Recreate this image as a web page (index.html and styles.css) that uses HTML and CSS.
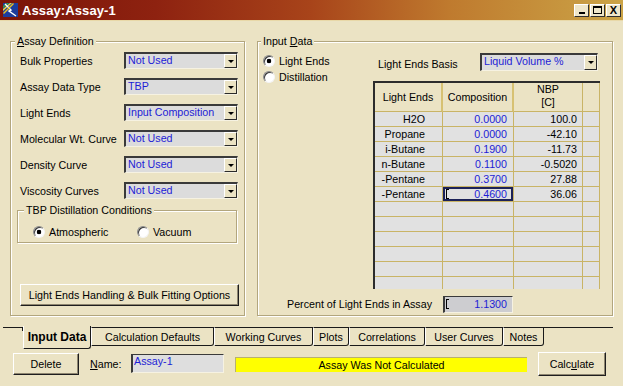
FILE: index.html
```html
<!DOCTYPE html>
<html>
<head>
<meta charset="utf-8">
<title>Assay:Assay-1</title>
<link rel="stylesheet" href="styles.css">
</head>
<body>
<div class="window">
  <div class="titlebar">
    <svg class="appicon" width="16" height="16" viewBox="0 0 16 16">
      <rect x="0" y="1" width="15" height="14" fill="#1c3c9c"/>
      <path d="M0 4 L4 1 L6 1 L0 6 Z" fill="#3aa040"/>
      <path d="M0 7 L7 1 L9 1 L0 9 Z" fill="#f2dc3a"/>
      <path d="M2 2 L8 8 L6 9 L13 14" stroke="#ffffff" stroke-width="1.4" fill="none"/>
      <path d="M0 11 L10 1 L11 2 L1 12 Z" fill="#e8c020"/>
    </svg>
    <span class="title">Assay:Assay-1</span>
    <div class="wbtns">
      <span class="wbtn"><i class="g-min"></i></span>
      <span class="wbtn"><i class="g-max"></i></span>
      <span class="wbtn close">X</span>
    </div>
  </div>

  <div class="main">
    <div class="group left">
      <span class="legend lg-left"><u>A</u>ssay Definition</span>
      <div class="frow first"><span class="lbl">Bulk Properties</span><div class="combo"><span class="val">Not Used</span><span class="arr"></span></div></div>
      <div class="frow"><span class="lbl">Assay Data Type</span><div class="combo"><span class="val">TBP</span><span class="arr"></span></div></div>
      <div class="frow"><span class="lbl">Light Ends</span><div class="combo"><span class="val">Input Composition</span><span class="arr"></span></div></div>
      <div class="frow"><span class="lbl">Molecular Wt. Curve</span><div class="combo"><span class="val">Not Used</span><span class="arr"></span></div></div>
      <div class="frow"><span class="lbl">Density Curve</span><div class="combo"><span class="val">Not Used</span><span class="arr"></span></div></div>
      <div class="frow"><span class="lbl">Viscosity Curves</span><div class="combo"><span class="val">Not Used</span><span class="arr"></span></div></div>

      <div class="group sub">
        <span class="legend lg-sub">TBP Distillation Conditions</span>
        <div class="hradios">
          <div class="radio atm"><span class="dot on"></span>Atmospheric</div>
          <div class="radio"><span class="dot"></span>Vacuum</div>
        </div>
      </div>

      <div class="btn wide">Light Ends Handling &amp; Bulk Fitting Options</div>
    </div>

    <div class="group right">
      <span class="legend lg-right">Input <u>D</u>ata</span>
      <div class="toprow">
        <div class="vradios">
          <div class="radio"><span class="dot on"></span>Light Ends</div>
          <div class="radio"><span class="dot"></span>Distillation</div>
        </div>
        <div class="tablecol">
          <div class="basis">
            <span class="basis-lbl">Light Ends Basis</span>
            <div class="combo basis-combo"><span class="val">Liquid Volume %</span><span class="arr"></span></div>
          </div>
          <div class="gridwrap">
            <div class="grid">
              <div class="hc h1">Light Ends</div>
              <div class="hc h2">Composition</div>
              <div class="hc h3">NBP<br>[C]</div>
              <div class="hc h4"></div>

              <div class="c name">H2O</div><div class="c comp">0.0000</div><div class="c nbp">100.0</div><div class="c ex"></div>
              <div class="c name">Propane</div><div class="c comp">0.0000</div><div class="c nbp">-42.10</div><div class="c ex"></div>
              <div class="c name">i-Butane</div><div class="c comp">0.1900</div><div class="c nbp">-11.73</div><div class="c ex"></div>
              <div class="c name">n-Butane</div><div class="c comp">0.1100</div><div class="c nbp">-0.5020</div><div class="c ex"></div>
              <div class="c name">-Pentane</div><div class="c comp">0.3700</div><div class="c nbp">27.88</div><div class="c ex"></div>
              <div class="c name">-Pentane</div><div class="c comp sel"><span class="caret"></span><span>0.4600</span></div><div class="c nbp">36.06</div><div class="c ex"></div>

              <div class="c"></div><div class="c"></div><div class="c"></div><div class="c ex"></div>
              <div class="c"></div><div class="c"></div><div class="c"></div><div class="c ex"></div>
              <div class="c"></div><div class="c"></div><div class="c"></div><div class="c ex"></div>
              <div class="c"></div><div class="c"></div><div class="c"></div><div class="c ex"></div>
              <div class="c"></div><div class="c"></div><div class="c"></div><div class="c ex"></div>
              <div class="c"></div><div class="c"></div><div class="c"></div><div class="c ex"></div>
            </div>
          </div>
        </div>
      </div>
      <div class="pctrow">
        <span class="pctlbl">Percent of Light Ends in Assay</span>
        <div class="field pct"><span class="caret"></span><span class="pctval">1.1300</span></div>
      </div>
    </div>
  </div>

  <div class="tabs">
    <span class="tab-stub"></span>
    <span class="tab active t1">Input Data</span>
    <span class="tab t2">Calculation Defaults</span>
    <span class="tab t3">Working Curves</span>
    <span class="tab t4">Plots</span>
    <span class="tab t5">Correlations</span>
    <span class="tab t6">User Curves</span>
    <span class="tab t7">Notes</span>
    <span class="tab-fill"></span>
  </div>

  <div class="bottombar">
    <div class="btn del">Delete</div>
    <span class="namelbl"><u>N</u>ame:</span>
    <div class="field name">Assay-1</div>
    <div class="status">Assay Was Not Calculated</div>
    <div class="btn calc">Calc<u>u</u>late</div>
  </div>
</div>
</body>
</html>
```

FILE: styles.css
```css
* { box-sizing: border-box; }

html, body {
  margin: 0;
  padding: 0;
}

body {
  width: 623px;
  height: 386px;
  overflow: hidden;
  background: #ebe3c4;
  font-family: "Liberation Sans", Arial, sans-serif;
  font-size: 10.7px;
  color: #000;
}

.window {
  width: 623px;
  height: 386px;
  display: flex;
  flex-direction: column;
}

/* ---------- title bar ---------- */
.titlebar {
  height: 21px;
  display: flex;
  align-items: center;
  padding: 0 2px 0 2px;
  background: linear-gradient(to right, #7a1408 0%, #8e2210 25%, #a8441a 50%, #bf7a2e 72%, #cba447 100%);
  border-bottom: 1px solid #e8d8a8;
}

.appicon {
  margin-left: 1px;
  flex: none;
}

.title {
  margin-left: 3px;
  color: #fff;
  font-weight: bold;
  font-size: 13px;
  letter-spacing: 0.1px;
}

.wbtns {
  margin-left: auto;
  display: flex;
  gap: 1px;
}

.wbtn {
  width: 15px;
  height: 13px;
  background: #efe6c9;
  border: 1px solid;
  border-color: #fff #303030 #303030 #fff;
  display: flex;
  align-items: center;
  justify-content: center;
  font-weight: bold;
  font-size: 11px;
  line-height: 11px;
}

.g-min {
  width: 6px;
  height: 2px;
  background: #000;
  margin-top: 6px;
}

.g-max {
  width: 9px;
  height: 8px;
  border: 1px solid #000;
  border-top-width: 2px;
}

/* ---------- main area ---------- */
.main {
  display: flex;
  gap: 12px;
  padding: 20px 10px 0 10px;
}

.group {
  border: 1px solid #b2a67e;
  box-shadow: inset 1px 1px 0 #fff, 1px 1px 0 #fff;
  display: flex;
  flex-direction: column;
}

.legend {
  align-self: flex-start;
  height: 13px;
  line-height: 13px;
  margin-top: -7px;
  padding: 0 2px;
  background: #ebe3c4;
  white-space: nowrap;
}

.group.left {
  width: 235px;
  height: 275px;
  padding: 0 6px;
}

.lg-left { margin-left: -2px; }

.frow {
  display: flex;
  align-items: center;
  height: 17px;
  margin-top: 9px;
}

.frow.first { margin-top: 4px; }

.lbl {
  width: 107px;
  padding-left: 3px;
  white-space: nowrap;
}

/* combo box */
.combo {
  width: 114px;
  height: 17px;
  display: flex;
  background: #dcdcdc;
  border-top: 2px solid #3a3a3a;
  border-left: 2px solid #3a3a3a;
  border-right: 1px solid #f6f2e2;
  border-bottom: 1px solid #f6f2e2;
}

.combo .val {
  flex: 1;
  color: #1c1cd6;
  padding-left: 2px;
  line-height: 13px;
  white-space: nowrap;
  overflow: hidden;
}

.combo .arr {
  width: 13px;
  background: #ebe3c4;
  border: 1px solid;
  border-color: #fff #2a2a2a #2a2a2a #fff;
  display: flex;
  align-items: center;
  justify-content: center;
}

.combo .arr::before {
  content: "";
  border-left: 3px solid transparent;
  border-right: 3px solid transparent;
  border-top: 3px solid #000;
}

/* TBP sub group */
.group.sub {
  width: 220px;
  height: 33px;
  margin-top: 11px;
  padding: 0 0 0 15px;
}

.lg-sub { margin-left: -9px; }

.hradios {
  display: flex;
  margin-top: 7px;
}

.radio {
  display: flex;
  align-items: center;
  height: 16px;
  white-space: nowrap;
}

.radio.atm { width: 104px; }

.dot {
  width: 12px;
  height: 12px;
  border-radius: 50%;
  margin-right: 4px;
  background: #fff;
  border: 1px solid;
  border-color: #8a8a8a #f4f4f4 #f4f4f4 #8a8a8a;
  box-shadow: inset 1px 1px 0 #3a3a3a;
  flex: none;
}

.dot.on {
  background: radial-gradient(circle at 50% 50%, #000 0, #000 2px, #fff 2.6px);
}

/* buttons */
.btn {
  background: #ebe3c4;
  border: 1px solid;
  border-color: #fff #1e1e1e #1e1e1e #fff;
  box-shadow: inset -1px -1px 0 #8e8670;
  display: flex;
  align-items: center;
  justify-content: center;
  white-space: nowrap;
}

.btn.wide {
  width: 219px;
  height: 22px;
  margin-top: 41px;
  margin-left: 3px;
}

/* ---------- right group ---------- */
.group.right {
  width: 356px;
  height: 275px;
  padding: 0 12px 0 5px;
}

.lg-right { margin-left: -2px; }

.toprow {
  display: flex;
  margin-top: 5px;
}

.vradios {
  width: 110px;
  display: flex;
  flex-direction: column;
  padding-top: 0;
}

.tablecol {
  width: 227px;
  display: flex;
  flex-direction: column;
}

.basis {
  display: flex;
  align-items: center;
  height: 18px;
}

.basis-lbl {
  padding-left: 5px;
  padding-top: 3px;
}

.combo.basis-combo {
  width: 118px;
  height: 18px;
  margin-left: auto;
  margin-right: 2px;
}

.gridwrap {
  margin-top: 10px;
  height: 208px;
  overflow: hidden;
  border-top: 2px solid #2c2c2c;
  border-left: 2px solid #2c2c2c;
}

.grid {
  display: grid;
  grid-template-columns: 68px 71px 69px 17px;
  grid-template-rows: 29px;
  grid-auto-rows: 15px;
}

.hc {
  background: #ebe3c4;
  border-right: 1px solid #c9b466;
  border-bottom: 1px solid #c9b466;
  display: flex;
  align-items: center;
  justify-content: center;
  text-align: center;
  line-height: 12px;
}

.hc.h1, .hc.h2 { border-right: 2px solid #d7c172; }
.hc.h3 { align-items: flex-start; padding-top: 0; line-height: 13px; }

.c {
  background: #e1e1e1;
  border-right: 1px solid #c9b466;
  border-bottom: 1px solid #c9b466;
  line-height: 14px;
  white-space: nowrap;
  display: flex;
  align-items: center;
  justify-content: flex-end;
}

.c.name { padding-right: 17px; }
.c.comp { color: #1c1cd6; padding-right: 6px; }
.c.nbp { padding-right: 5px; }

.c.sel {
  box-shadow: inset 0 0 0 2px #1c2258;
  justify-content: space-between;
  padding-left: 3px;
}

.caret {
  width: 3px;
  height: 10px;
  border: 1px solid #000;
  border-right: none;
}

/* percent row */
.pctrow {
  display: flex;
  align-items: center;
  margin-top: 7px;
  height: 16px;
}

.pctlbl {
  width: 169px;
  text-align: right;
}

.field {
  border-top: 1px solid #3a3a3a;
  border-left: 2px solid #3a3a3a;
  border-right: 1px solid #f6f2e2;
  border-bottom: 1px solid #f6f2e2;
}

.field.pct {
  width: 70px;
  height: 17px;
  margin-left: 11px;
  background: #cdcdd0;
  display: flex;
  align-items: center;
  justify-content: space-between;
  padding: 0 5px 0 1px;
  color: #1c1cd6;
}

/* ---------- tabs ---------- */
.tabs {
  display: flex;
  align-items: flex-start;
  margin-top: 10px;
  padding: 0 10px 0 3px;
  height: 23px;
}

.tab-stub {
  width: 20px;
  height: 4px;
  margin-top: 1px;
  border-top: 1px solid #1a1a1a;
  border-right: 1px solid #1a1a1a;
}

.tab {
  margin-top: 1px;
  height: 19px;
  border-top: 1px solid #1a1a1a;
  border-right: 1px solid #1a1a1a;
  border-bottom: 1px solid #1a1a1a;
  border-left: 1px solid #fff;
  border-bottom-right-radius: 3px;
  display: flex;
  align-items: center;
  justify-content: center;
  white-space: nowrap;
}

.tab.active {
  margin-top: 0;
  height: 23px;
  border-top: none;
  font-weight: bold;
  font-size: 12px;
  padding-bottom: 1px;
}

.t1 { width: 68px; }
.t2 { width: 123px; }
.t3 { width: 99px; }
.t4 { width: 36px; }
.t5 { width: 76px; }
.t6 { width: 78px; }
.t7 { width: 41px; }

.tab-fill {
  flex: 1;
  height: 4px;
  margin-top: 1px;
  border-top: 1px solid #1a1a1a;
}

/* ---------- bottom bar ---------- */
.bottombar {
  display: flex;
  align-items: center;
  height: 24px;
  margin-top: 3px;
  padding-left: 13px;
}

.btn.del {
  width: 66px;
  height: 22px;
}

.namelbl {
  width: 41px;
  margin-left: 11px;
}

.field.name {
  width: 93px;
  height: 19px;
  background: #dedede;
  color: #1c1cd6;
  padding-left: 1px;
  line-height: 13px;
  align-self: flex-start;
  margin-top: 2px;
}

.status {
  width: 292px;
  height: 15px;
  margin-left: 11px;
  background: #ffff00;
  border-top: 1px solid #b8b070;
  border-left: 1px solid #b8b070;
  display: flex;
  align-items: center;
  justify-content: center;
}

.btn.calc {
  width: 68px;
  height: 24px;
  margin-left: 11px;
}
```
